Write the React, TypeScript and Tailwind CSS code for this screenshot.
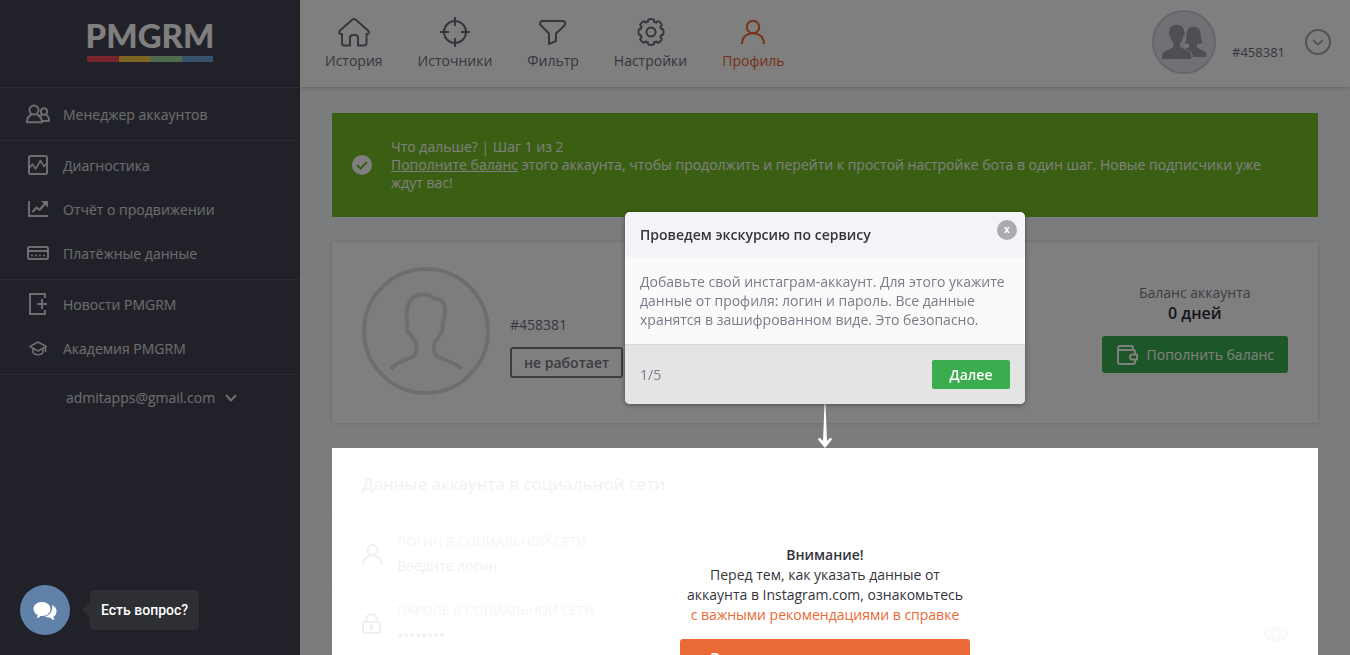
import { useState } from 'react'
import type { ReactNode } from 'react'

interface IconProps {
  className?: string
}

interface MenuItem {
  label: string
  icon: ReactNode
}

function Svg({ size, box, className, width = 2, children }: IconProps & { size: string; box: string; width?: number; children: ReactNode }) {
  return (
    <svg
      viewBox={box}
      className={`${size} shrink-0 ${className ?? ''}`}
      fill="none"
      stroke="currentColor"
      strokeWidth={width}
      strokeLinejoin="round"
      aria-hidden="true"
    >
      {children}
    </svg>
  )
}

// Sidebar
const managerIcon = (
  <Svg size="w-6 h-5" box="0 0 24 20">
    <circle cx="8" cy="6" r="4.500" />
    <path d="M5.500 10.500c-2.500 1.200-4.500 3.500-4.500 7.700h15c0-4.200-2.500-6.500-5-7.700" />
    <circle cx="18" cy="7.500" r="3.200" />
    <path d="M16 10.800l-2 1.500M20 10.800c1.800.8 3 2.700 3 6.200h-7" />
  </Svg>
)
const diagnosticsIcon = (
  <Svg size="w-5 h-5" box="0 0 20 20">
    <rect x="1" y="1" width="18" height="18" rx="1.500" />
    <path d="M1.500 13L4.500 9 7.500 14l5-8.500 3.500 6 2.500-3" strokeWidth="1.600" />
  </Svg>
)
const reportIcon = (
  <Svg size="w-5 h-5" box="0 0 20 20">
    <path d="M1 2v15h19" strokeLinejoin="miter" />
    <path d="M4.500 13l4-4.500 3 2.500 6-7" />
    <path d="M13 2h7v6.500z" fill="currentColor" stroke="none" />
  </Svg>
)
const cardIcon = (
  <Svg size="w-6 h-5" box="0 0 24 20">
    <rect x="2" y="4" width="20" height="12" rx="1.500" />
    <path d="M2 8h20" />
    <path d="M5 12.500h14" strokeWidth="1.500" strokeDasharray="2 2" />
  </Svg>
)
const newsIcon = (
  <Svg size="w-5 h-6" box="0 0 20 24">
    <path d="M17 6V2H2v20h15v-4M9 12h10M14 7v10" strokeLinejoin="miter" />
  </Svg>
)
const academyIcon = (
  <Svg size="w-5 h-5" box="0 0 20 20" width={1.6}>
    <path d="M2 8.500L10 4l8 4.500-8 4.500z" />
    <path d="M5 10.500v4c1.500 3 8.500 3 10 0v-4M17.500 9v5" />
  </Svg>
)

const menuGroups: { className: string; items: MenuItem[] }[] = [
  { className: 'py-1', items: [{ label: 'Менеджер аккаунтов', icon: managerIcon }] },
  {
    className: 'pt-[2px] pb-1',
    items: [
      { label: 'Диагностика', icon: diagnosticsIcon },
      { label: 'Отчёт о продвижении', icon: reportIcon },
      { label: 'Платёжные данные', icon: cardIcon },
    ],
  },
  {
    className: 'pt-[2px] pb-1',
    items: [
      { label: 'Новости PMGRM', icon: newsIcon },
      { label: 'Академия PMGRM', icon: academyIcon },
    ],
  },
]

// Top navigation
const navItems: MenuItem[] = [
  {
    label: 'История',
    icon: (
      <Svg size="w-8 h-8" box="0 0 32 32">
        <path d="M14.500 3.500q1.500-1 3 0L30 14.500c1.700 2 .5 3.500-1 3.500h-.5v9q0 2.500-2.500 2.500h-6V22q0-3-3-3h-2q-3 0-3 3v7.500H6.500Q4 29.500 4 27v-9H3c-1.500 0-2.700-1.500-1-3.500z" />
      </Svg>
    ),
  },
  {
    label: 'Источники',
    icon: (
      <Svg size="w-8 h-8" box="0 0 32 32">
        <circle cx="16" cy="16" r="11" />
        <path d="M16 1v9M16 22v9M1 16h9M22 16h9" />
      </Svg>
    ),
  },
  {
    label: 'Фильтр',
    icon: (
      <Svg size="w-8 h-8" box="0 0 32 32">
        <path d="M5.500 5h20c3 0 3.500 3 2 4.500L19 17.500V25l-7 3V17.500L4 9.500C2.500 8 3 5 5.500 5z" />
      </Svg>
    ),
  },
  {
    label: 'Настройки',
    icon: (
      <Svg size="w-8 h-8" box="0 0 32 32">
        <path d="M13 4.500q0-1.500 3-1.500t3 1.500v1.200l2.300 1 .9-1q1-1 3.100 1.100t1.100 3.100l-1 1 1 2.200h.6q1.500 0 1.500 2.900t-1.500 3h-.6l-1 2.300 1 .9q1 1-1.100 3.100t-3.100 1.100l-.9-1-2.300 1v1.200q0 1.400-3 1.400t-3-1.400v-1.200l-2.300-1-.9 1q-1 1-3.100-1.100t-1.100-3.100l1-.9-1-2.300H5Q3.500 19 3.500 16T5 13.100h.6l1-2.200-1-1q-1-1 1.100-3.100t3.100-1.100l.9 1 2.300-1z" />
        <circle cx="16" cy="16" r="4.500" />
      </Svg>
    ),
  },
  {
    label: 'Профиль',
    icon: (
      <Svg size="w-8 h-8" box="0 0 32 32">
        <circle cx="16" cy="11" r="6.200" />
        <path d="M5 28c0-14.500 22-14.500 22 0" />
      </Svg>
    ),
  },
]

function Sidebar() {
  return (
    <aside className="w-[300px] shrink-0 bg-[#434452] text-[14px] text-white/80">
      <a href="#home" className="flex h-[87px] flex-col items-center pt-4">
        <span className="font-[Lato] text-[33px] leading-[38px] font-black text-white">PMGRM</span>
        <span className="mt-[2px] flex h-[6px] w-[126px]">
          <span className="flex-1 bg-[#f04856]" />
          <span className="flex-1 bg-[#f9cb45]" />
          <span className="flex-1 bg-[#9bd59b]" />
          <span className="flex-1 bg-[#6fa9d9]" />
        </span>
      </a>
      {menuGroups.map((group) => (
        <nav key={group.items[0].label} className={`border-t border-[#565766] ${group.className}`}>
          {group.items.map((item) => (
            <a key={item.label} href="#menu" className="flex h-11 items-center gap-[13px] pl-[26px]">
              <span className="flex w-6 justify-center">{item.icon}</span>
              {item.label}
            </a>
          ))}
        </nav>
      ))}
      <div className="border-t border-[#565766] pt-3 pl-[66px]">
        <button type="button" className="flex items-center gap-[10px] leading-[22px]">
          admitapps@gmail.com
          <Svg size="w-3 h-3" box="0 0 12 12">
            <path d="M1 3l5 5.500L11 3" />
          </Svg>
        </button>
      </div>
    </aside>
  )
}

function Header() {
  return (
    <header className="flex h-[87px] shrink-0 items-center justify-between bg-white pr-[19px] pl-[25px] shadow-[0_1px_4px_rgba(0,0,0,0.2)]">
      <nav className="flex gap-[35px] text-[14px] leading-5 text-[#6c6e7c]">
        {navItems.map((item) => (
          <a
            key={item.label}
            href="#nav"
            className={`flex flex-col items-center gap-[3px] ${item.label === 'Профиль' ? 'text-[#f0622c]' : ''}`}
          >
            {item.icon}
            {item.label}
          </a>
        ))}
      </nav>
      <div className="flex items-center">
        <svg viewBox="0 0 64 64" className="mb-1 h-16 w-16" aria-hidden="true">
          <circle cx="32" cy="32" r="31" fill="#e0e2ea" stroke="#cbccd8" strokeWidth="2" />
          <g fill="#9c9ca8">
            <path d="M32.500 33c3-2 1-8 2.500-12 1.500-6 11.500-6 13 0 1 4 .5 8 2.500 11.500-2 1.500-4 1-5.500 1.500v3.500l6 3c3 1 3.500 3 3.500 6.500H41l-1-4-7-4.500 4-1V34c-1.500-.3-3-.5-4.500-1z" />
            <path d="M10 49c0-6 1-7 5-8.500l6.500-3.500v-4c-2-2-3-4-3.500-7-1.500-2-1.500-4-.5-5C17 12.500 32 12.500 32 21c1 1 1 3-.7 5-.5 3-1.300 5-3.100 7v4l6.500 3.500c3.500 1.500 4.800 2.500 4.800 8.500z" />
          </g>
        </svg>
        <span className="mt-[19px] ml-4 text-[13px] text-[#6c6e7c]">#458381</span>
        <button type="button" aria-label="Меню аккаунта" className="mb-1 ml-5 text-[#a3a6b5]">
          <Svg size="w-[26px] h-[26px]" box="0 0 26 26">
            <circle cx="13" cy="13" r="12" />
            <path d="M8 11l5 4.500 5-4.500" />
          </Svg>
        </button>
      </div>
    </header>
  )
}

function Notice() {
  return (
    <section className="flex items-center gap-[19px] bg-[#75be24] px-5 py-[25px] text-[14px] leading-[18px] text-white">
      <svg viewBox="0 0 20 20" className="h-5 w-5 shrink-0" aria-hidden="true">
        <circle cx="10" cy="10" r="10" fill="white" />
        <path d="M5 10l3.500 3.500L15 7" fill="none" stroke="#75be24" strokeWidth="2" />
      </svg>
      <div className="max-w-[900px]">
        <p>Что дальше? | Шаг 1 из 2</p>
        <p>
          <a href="#balance" className="underline">Пополните баланс</a> этого аккаунта, чтобы продолжить и перейти к простой настройке бота в один шаг. Новые подписчики уже ждут вас!
        </p>
      </div>
    </section>
  )
}

function AccountCard() {
  return (
    <section className="flex items-center justify-between bg-white px-[30px] pt-[25px] pb-7 shadow-[0_0_4px_rgba(0,0,0,0.15)]">
      <div className="flex items-center gap-5">
        <svg viewBox="0 0 128 128" className="h-32 w-32" fill="none" stroke="#dcdde3" strokeWidth="4" strokeLinecap="round" aria-hidden="true">
          <circle cx="64" cy="64" r="62" fill="#fafafa" />
          <path
            strokeWidth="4"
            strokeLinejoin="round"
            d="M30 101c5-6 12-8 20-11 5-3 5-6 4-15-4-3-4-7-7-9-2 0-3-4-1.500-8-2-12-1-20 4-26 6-6 18-6 23 0 9-1 12 7 10 17 0 4-2 7-2 9 1 3 0 7-2 8-2 4-3 7-6 9-1 9-1 12 4 15 8 3 16 6 22 11"
          />
        </svg>
        <div className="mt-[30px] flex flex-col items-start gap-3">
          <span className="text-[14px] leading-5 text-[#6c6e7c]">#458381</span>
          <span className="rounded-[3px] border-2 border-[#787884] px-3 py-[2px] text-[14px] leading-[23px] font-semibold text-[#787884]">
            не работает
          </span>
        </div>
      </div>
      <div className="mb-[6px] flex flex-col items-center">
        <span className="text-[14px] leading-5 text-[#7c7e8a]">Баланс аккаунта</span>
        <span className="text-[16px] leading-5 font-semibold text-[#2b2c36]">0 дней</span>
        <button type="button" className="mt-[13px] flex h-[37px] items-center gap-[9px] rounded-[3px] bg-[#3bad4e] px-[14px] text-[14px] text-white">
          <Svg size="w-[22px] h-5" box="0 0 22 20">
            <path d="M2 3.500V17q0 2 2 2h13q2 0 2-2v-2.500M2 3.500Q2 1 4 1h11q2 0 2 2v2M2 3.500Q2 5 4 5h13q2 0 2 2v2.500" />
            <path d="M21 9.500h-4.500c-3.500 0-3.500 5 0 5H21z" />
          </Svg>
          Пополнить баланс
        </button>
      </div>
    </section>
  )
}

function Tour({ onClose }: { onClose: () => void }) {
  return (
    <div className="absolute inset-x-0 bottom-full flex flex-col items-center">
      <div role="dialog" aria-labelledby="tour-title" className="relative w-[400px] overflow-hidden rounded-[5px] bg-[#fafafa] text-[14px] shadow-[0_1px_5px_rgba(0,0,0,0.4)]">
        <h2 id="tour-title" className="bg-[#f3f4f7] px-[15px] pt-[13px] pb-3 leading-5 font-semibold text-[#34353d]">
          Проведем экскурсию по сервису
        </h2>
        <button
          type="button"
          aria-label="Закрыть"
          onClick={onClose}
          className="absolute top-2 right-2 flex h-5 w-5 items-center justify-center rounded-full bg-[#a9abad] pb-[2px] text-[10px] font-bold text-white"
        >
          x
        </button>
        <p className="p-[15px] leading-[19px] text-[#7b7b89]">
          Добавьте свой инстаграм-аккаунт. Для этого укажите данные от профиля: логин и пароль. Все данные хранятся в зашифрованном виде. Это безопасно.
        </p>
        <div className="flex items-center justify-between border-t border-[#dadada] bg-[#e4e4e4] p-[15px] text-[#7b7b89]">
          1/5
          <button type="button" className="h-[29px] w-[78px] rounded-[2px] bg-[#3bad4e] font-semibold text-white">
            Далее
          </button>
        </div>
      </div>
      <svg viewBox="0 0 14 44" className="h-11 w-[14px]" aria-hidden="true">
        <path d="M6.500 0h1l1.500 37 3-3q2-.5 2 1.500L7 44 0 35.500q0-2 2-1.500l3 3z" fill="white" />
      </svg>
    </div>
  )
}

function AccountForm() {
  return (
    <form className="opacity-10">
      <h2 className="border-b border-[#e3e3e8] px-[30px] pt-6 pb-[23px] text-[17px] leading-6 text-[#787a88]">
        Данные аккаунта в социальной сети
      </h2>
      <div className="flex h-[69px] items-center gap-[14px] border-b border-[#e3e3e8] px-[30px] text-[#787a88]">
        <Svg size="w-[21px] h-[21px]" box="0 0 21 21">
          <circle cx="10.500" cy="6" r="5" />
          <path d="M1 21c0-12.500 19-12.500 19 0" />
        </Svg>
        <div className="flex flex-1 flex-col gap-[3px]">
          <label htmlFor="login" className="text-[13px] leading-5 text-[#9a9ba6] uppercase">Логин в социальной сети</label>
          <input id="login" placeholder="Введите логин" className="text-[14px] leading-6 outline-none placeholder:text-[#787a88]" />
        </div>
      </div>
      <div className="flex h-[69px] items-center gap-[14px] px-[30px] text-[#787a88]">
        <Svg size="w-[21px] h-[21px]" box="0 0 21 21">
          <rect x="1" y="9" width="17" height="11" rx="1" />
          <path d="M4.500 9V6q0-5 5-5t5 5v3M9.500 14v3.500" />
          <circle cx="9.500" cy="13.500" r="1.200" />
        </Svg>
        <div className="flex flex-1 flex-col gap-[3px]">
          <label htmlFor="password" className="text-[13px] leading-5 text-[#9a9ba6] uppercase">Пароль в социальной сети</label>
          <input id="password" type="password" placeholder="••••••••" className="text-[16px] leading-6 outline-none placeholder:text-[#787a88]" />
        </div>
        <button type="button" aria-label="Показать пароль" className="mt-5 text-[#c8c8d0]">
          <Svg size="w-6 h-4" box="0 0 24 16">
            <path d="M1 8c4-8.500 18-8.500 22 0-4 8.500-18 8.500-22 0z" />
            <circle cx="12" cy="8" r="4.500" />
          </Svg>
        </button>
      </div>
      <div className="h-24" />
    </form>
  )
}

function Chat() {
  return (
    <div className="fixed bottom-5 left-5 z-30 flex items-center gap-3">
      <button type="button" aria-label="Чат" className="flex h-[50px] w-[50px] items-center justify-center rounded-full bg-[#6182a8]">
        <svg viewBox="0 0 24 20" className="mt-[2px] h-5 w-6" fill="white" aria-hidden="true">
          <path d="M9 1c5 0 8.500 3 8.500 7S14 15 9 15l-1.500-.1C6 16.500 5 17 3.500 17c1-1 1.300-2 1.200-3C2 12.800.5 10.500.5 8c0-4 3.500-7 8.500-7z" />
          <path d="M19 4c3 1.300 4.500 3.500 4.500 6.200 0 2.300-1 4.300-3 5.600 0 1.200.3 2.200 1 3.200-1.800 0-3.200-1-4.200-2.500-2 .2-4-.2-5.300-1.200C17 14.500 20 10 19 4z" />
        </svg>
      </button>
      <div className="flex items-center">
        <svg viewBox="0 0 8 16" className="h-4 w-2" aria-hidden="true">
          <path d="M8 0v16L0 8z" fill="#2e2f33" />
        </svg>
        <span className="rounded-[4px] bg-[#2e2f33] px-[11px] py-[10px] font-[Roboto] text-[14px] leading-5 font-medium text-white">
          Есть вопрос?
        </span>
      </div>
    </div>
  )
}

export default function App() {
  const [tourOpen, setTourOpen] = useState(true)

  return (
    <div className="flex h-screen overflow-hidden bg-[#f6f8fc] font-['Open_Sans',sans-serif]">
      <Sidebar />
      <div className="flex min-w-0 flex-1 flex-col">
        <Header />
        <main className="flex flex-col gap-[25px] px-8 pt-[26px]">
          <Notice />
          <AccountCard />
          <section className="relative z-20 bg-white">
            <AccountForm />
            <div className="absolute inset-x-0 top-[97px] flex flex-col items-center text-center text-[14px] leading-5 text-[#34353d]">
              <strong className="font-semibold">Внимание!</strong>
              <p>
                Перед тем, как указать данные от
                <br />
                аккаунта в Instagram.com, ознакомьтесь
                <br />
                <a href="#help" className="text-[#ea6a36]">с важными рекомендациями в справке</a>
              </p>
              <button type="button" className="mt-[14px] h-10 w-[290px] rounded-[3px] bg-[#ea6a36] text-[16px] font-semibold text-white">
                Все понятно, ввести данные
              </button>
            </div>
            {tourOpen && <Tour onClose={() => setTourOpen(false)} />}
          </section>
        </main>
      </div>
      {tourOpen && <div className="fixed inset-0 z-10 bg-black/50" />}
      <Chat />
    </div>
  )
}
